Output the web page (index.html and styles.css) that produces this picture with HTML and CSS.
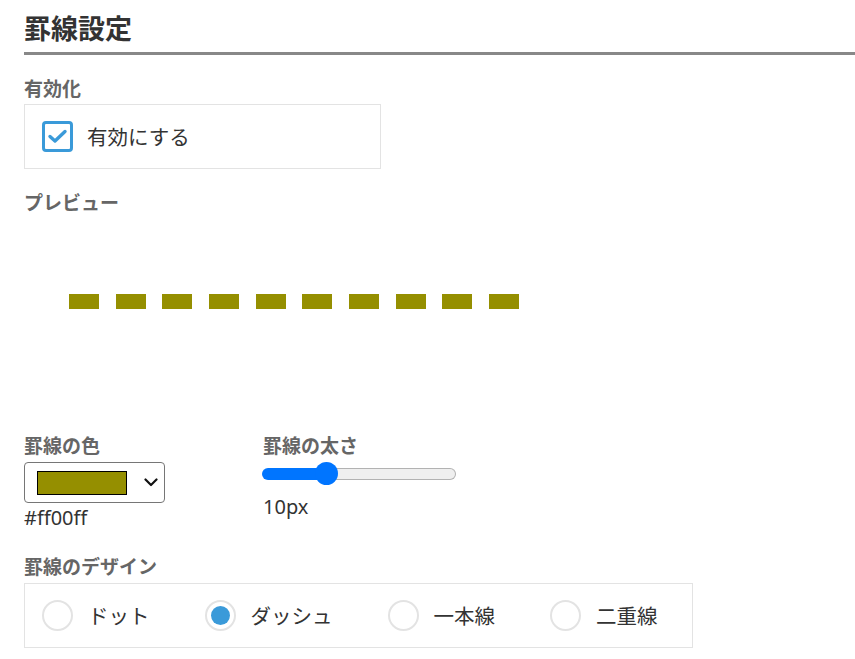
FILE: index.html
```html
<!DOCTYPE html>
<html lang="ja">
<head>
<meta charset="utf-8">
<title>罫線設定</title>
<link rel="stylesheet" href="styles.css">
</head>
<body>
<main class="page">
  <h1 class="title">罫線設定</h1>

  <section class="field">
    <div class="label">有効化</div>
    <label class="check-box">
      <span class="checkbox">
        <svg width="25" height="25" viewBox="0 0 25 25" aria-hidden="true">
          <path d="M5 12.5 L10 17 L20 7.5" fill="none" stroke="#3a9ad9" stroke-width="3.4" stroke-linecap="round" stroke-linejoin="round"/>
        </svg>
      </span>
      <span class="check-text">有効にする</span>
    </label>
  </section>

  <section class="field">
    <div class="label label-preview">プレビュー</div>
    <div class="preview">
      <div class="dash-line"></div>
    </div>
  </section>

  <div class="row">
    <div class="col col-color">
      <div class="label">罫線の色</div>
      <div class="color-select" role="button" aria-label="罫線の色">
        <span class="swatch"></span>
        <svg class="chevron" width="14" height="9" viewBox="0 0 14 9" aria-hidden="true">
          <path d="M1.5 1.5 L7 7 L12.5 1.5" fill="none" stroke="#111" stroke-width="2.2" stroke-linecap="round" stroke-linejoin="round"/>
        </svg>
      </div>
      <div class="value value-color">#ff00ff</div>
    </div>
    <div class="col">
      <div class="label">罫線の太さ</div>
      <input class="range" type="range" min="1" max="30" value="10" style="--fill: 34%;">
      <div class="value value-width">10px</div>
    </div>
  </div>

  <section class="field">
    <div class="label label-design">罫線のデザイン</div>
    <div class="radio-box">
      <label class="radio-item"><span class="radio"></span><span class="radio-text">ドット</span></label>
      <label class="radio-item"><span class="radio radio-on"></span><span class="radio-text">ダッシュ</span></label>
      <label class="radio-item"><span class="radio"></span><span class="radio-text">一本線</span></label>
      <label class="radio-item"><span class="radio"></span><span class="radio-text">二重線</span></label>
    </div>
  </section>
</main>
</body>
</html>
```

FILE: styles.css
```css
* {
  box-sizing: border-box;
}

html, body {
  margin: 0;
  padding: 0;
  background: #fff;
}

body {
  font-family: "Noto Sans CJK JP", "Noto Sans", sans-serif;
  color: #333;
}

.page {
  padding: 8px 0 0 24px;
}

.title {
  margin: 0;
  font-size: 27px;
  font-weight: 700;
  line-height: 40px;
  color: #333;
  padding-bottom: 4px;
  border-bottom: 3px solid #888;
}

.label {
  font-size: 19px;
  font-weight: 700;
  line-height: 24px;
  color: #666;
}

.field > .label {
  margin-top: 21px;
}

.field > .label-design {
  margin-top: 24.5px;
}

.check-box {
  margin-top: 4px;
  width: 357px;
  display: flex;
  align-items: center;
  gap: 14px;
  padding: 16px 17px;
  border: 1px solid #e3e3e3;
}

.checkbox {
  width: 31px;
  height: 31px;
  border: 3px solid #3a9ad9;
  border-radius: 4px;
  display: flex;
  align-items: center;
  justify-content: center;
  background: #fff;
  flex: none;
}

.check-text,
.radio-text {
  font-size: 20.5px;
  line-height: 31px;
  color: #333;
}

.preview {
  height: 219px;
  padding: 80px 0 0 45px;
}

.dash-line {
  width: 450px;
  height: 15px;
  background: repeating-linear-gradient(90deg, #958f00 0 30px, transparent 30px 46.67px);
}

.row {
  display: flex;
}

.col-color {
  width: 239px;
}

.color-select {
  margin-top: 5px;
  width: 141px;
  height: 41px;
  border: 1px solid #767676;
  border-radius: 4px;
  display: flex;
  align-items: center;
  padding: 0 6px 0 12px;
  justify-content: space-between;
  background: #fff;
}

.swatch {
  width: 90px;
  height: 24px;
  background: #958f00;
  border: 1px solid #000;
}

.chevron {
  display: block;
}

.value {
  font-family: "Noto Sans", "Noto Sans CJK JP", sans-serif;
  font-size: 20px;
  line-height: 24px;
  color: #333;
}

.value-color {
  margin-top: 2.5px;
}

.value-width {
  margin-top: 10px;
}

.range {
  -webkit-appearance: none;
  appearance: none;
  display: block;
  margin: 5px 0 0 -1px;
  width: 194px;
  height: 23px;
  background: transparent;
  padding: 0;
}

.range::-webkit-slider-runnable-track {
  height: 12px;
  border-radius: 6px;
  border: 1px solid transparent;
  background:
    linear-gradient(90deg, #0075ff 0 var(--fill), #efefef var(--fill)) padding-box,
    linear-gradient(90deg, #0075ff 0 var(--fill), #b2b2b2 var(--fill)) border-box;
}

.range::-webkit-slider-thumb {
  -webkit-appearance: none;
  appearance: none;
  width: 23px;
  height: 23px;
  border-radius: 50%;
  background: #0075ff;
  border: none;
  margin-top: -6.5px;
}

.radio-box {
  margin-top: 5px;
  width: 669px;
  display: flex;
  align-items: center;
  gap: 55px;
  padding: 16px 17px;
  border: 1px solid #e3e3e3;
}

.radio-item {
  display: flex;
  align-items: center;
  gap: 15px;
}

.radio {
  width: 31px;
  height: 31px;
  border-radius: 50%;
  border: 2px solid #e3e3e3;
  background: #fff;
  flex: none;
  display: flex;
  align-items: center;
  justify-content: center;
}

.radio-on::after {
  content: "";
  width: 19px;
  height: 19px;
  border-radius: 50%;
  background: #3a9ad9;
}
```
